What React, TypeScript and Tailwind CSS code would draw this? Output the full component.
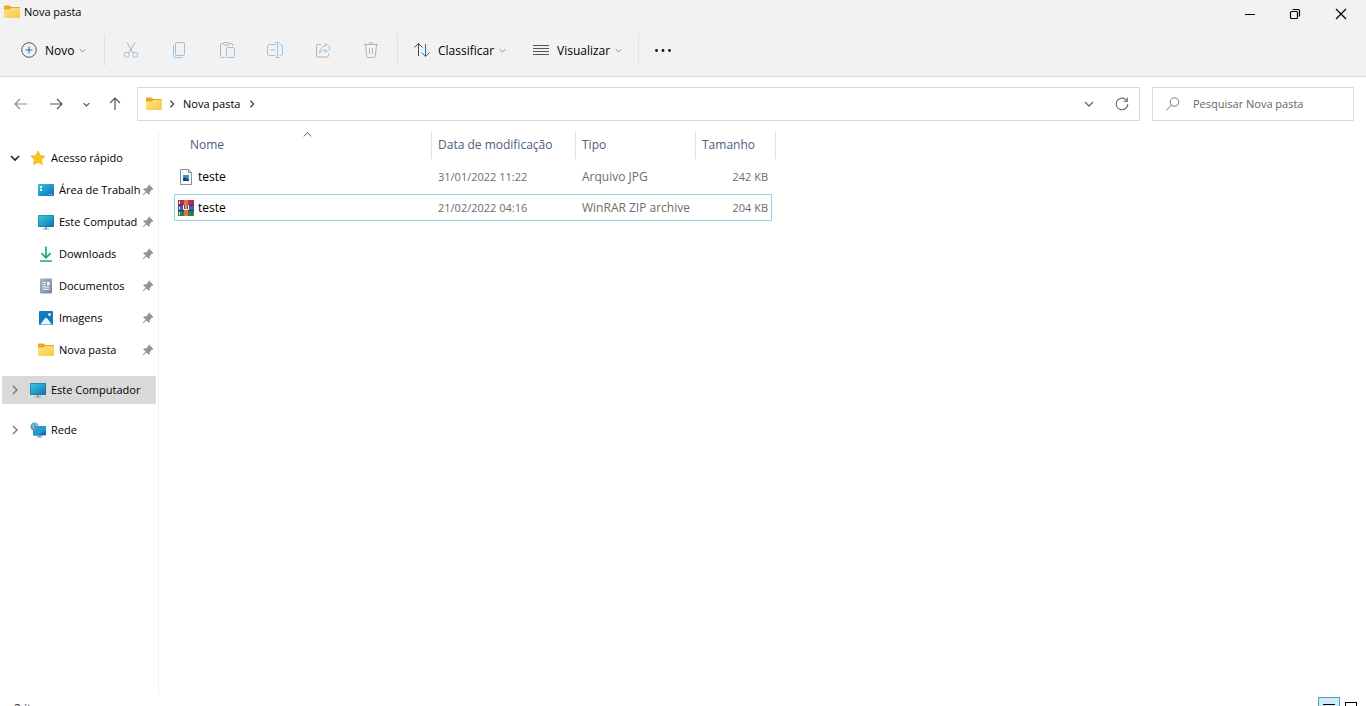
import type { ReactNode } from "react";

const FolderIcon = () => (
  <svg width="16" height="16" viewBox="0 0 16 16" className="shrink-0">
    <defs>
      <linearGradient id="folder" x1="0" y1="0" x2="1" y2="1">
        <stop offset="0" stopColor="#ffe58a" />
        <stop offset="1" stopColor="#f8c844" />
      </linearGradient>
    </defs>
    <path d="M0 2.500a1 1 0 0 1 1-1h4.600l1.800 1.600H15a1 1 0 0 1 1 1V9H0z" fill="#e9a820" />
    <path d="M0 5.500h5.400l2-1.600H15a1 1 0 0 1 1 1V13a1 1 0 0 1-1 1H1a1 1 0 0 1-1-1z" fill="url(#folder)" />
  </svg>
);

const MonitorIcon = () => (
  <svg width="16" height="16" viewBox="0 0 16 16" className="shrink-0">
    <defs>
      <linearGradient id="monitor" x1="0" y1="0" x2="1" y2="1">
        <stop offset="0" stopColor="#35cfe0" />
        <stop offset="1" stopColor="#1272b4" />
      </linearGradient>
    </defs>
    <path d="M7 13h2v2H7zM5 14.500h6v1H5z" fill="#8d9aa5" />
    <rect x="0" y="1" width="16" height="12" rx="1" fill="#1b6b94" />
    <rect x="0.600" y="1.600" width="14.800" height="10.800" rx="0.500" fill="url(#monitor)" />
  </svg>
);

const DesktopIcon = () => (
  <svg width="16" height="16" viewBox="0 0 16 16" className="shrink-0">
    <defs>
      <linearGradient id="desktop" x1="0" y1="0" x2="1" y2="1">
        <stop offset="0" stopColor="#2fc3e0" />
        <stop offset="1" stopColor="#0f6fb5" />
      </linearGradient>
    </defs>
    <rect x="0" y="2" width="16" height="12" rx="1" fill="url(#desktop)" />
    <path d="M2 4h2v2H2zM2 7h2v2H2z" fill="#fff" />
    <path d="M11 12h1v1h-1zM13 12h1v1h-1z" fill="#bfe6f7" />
  </svg>
);

const DownloadIcon = () => (
  <svg width="16" height="16" viewBox="0 0 16 16" fill="none" stroke="#23a58b" strokeWidth="1.7" className="shrink-0">
    <path d="M8 .5v11M3.400 7.200 8 11.800l4.600-4.600M2 15h12" />
  </svg>
);

const DocumentIcon = () => (
  <svg width="16" height="16" viewBox="0 0 16 16" className="shrink-0">
    <defs>
      <linearGradient id="document" x1="0" y1="0" x2="1" y2="1">
        <stop offset="0" stopColor="#a9b8c9" />
        <stop offset="1" stopColor="#71859d" />
      </linearGradient>
    </defs>
    <rect x="2" y="0.500" width="12" height="15" rx="1" fill="url(#document)" />
    <path d="M4.500 4h3.200v1H4.500zM4.500 6.200h3.200v1H4.500zM4.500 8.500h7v1h-7zM4.500 10.700h7v1h-7zM9 4h2.600v3.200H9z" fill="#fff" />
  </svg>
);

const PictureIcon = () => (
  <svg width="16" height="16" viewBox="0 0 16 16" className="shrink-0">
    <rect x="1" y="1" width="14" height="14" rx="1" fill="#1478c2" />
    <path d="m2.200 14.600 4.600-6a1.500 1.500 0 0 1 2.400 0l4.600 6z" fill="#e9f6fd" />
    <circle cx="11.500" cy="4.600" r="1.300" fill="#fff" />
  </svg>
);

const StarIcon = () => (
  <svg width="16" height="16" viewBox="0 0 16 16" className="shrink-0">
    <path
      d="m8 1 2.100 4.600 5 .6-3.700 3.400 1 5L8 12.200l-4.400 2.400 1-5L.9 6.200l5-.6z"
      fill="#fcc419"
      stroke="#f2b20e"
      strokeWidth="0.8"
      strokeLinejoin="round"
    />
  </svg>
);

const NetworkIcon = () => (
  <svg width="16" height="16" viewBox="0 0 16 16" className="shrink-0">
    <path d="M8.500 13h2v1.500H12v1H7v-1h1.500z" fill="#7f97a8" />
    <rect x="3" y="4" width="13" height="9.500" rx="0.8" fill="#1577b3" />
    <path d="M16 4v4L7 13.500H3.800A.8.8 0 0 1 3 12.700V4z" fill="#219bd0" />
    <circle cx="4.600" cy="4.600" r="4.200" fill="#4d9abd" />
    <path d="M1.500 2.500 4 4l-1 2.500M5 1l1 2 2.500.5" stroke="#c3e0ec" strokeWidth="0.9" fill="none" />
  </svg>
);

const PinIcon = () => (
  <svg width="12" height="12" viewBox="0 0 12 12" className="shrink-0" fill="#8c959d">
    <path d="M7 .6 11.400 5l-.8.8-.8-.1-2.100 2.200.1 2-.9.9L4.400 8.400.9 11.500l-.4-.4L3.600 7.600 1.200 5.200l.9-.9 2.100.1L6.400 2.200l-.2-.8z" />
  </svg>
);

type Dir = "down" | "right" | "up";
const chevrons: Record<Dir, string> = {
  down: "M1 3l4 4 4-4",
  right: "M3 1l4 4-4 4",
  up: "M1 7l4-4 4 4",
};
const Chevron = ({ dir = "down", size = 7, color = "#888", weight = 1.3 }: { dir?: Dir; size?: number; color?: string; weight?: number }) => (
  <svg width={size} height={size} viewBox="0 0 10 10" fill="none" stroke={color} strokeWidth={weight} className="shrink-0">
    <path d={chevrons[dir]} />
  </svg>
);

const Line = ({ children, color = "#333" }: { children: ReactNode; color?: string }) => (
  <svg width="16" height="16" viewBox="0 0 16 16" fill="none" stroke={color} strokeWidth="1" className="shrink-0">
    {children}
  </svg>
);

const gray = "#b4b4b4";
const blue = "#9cc3df";

const actions: { label: string; icon: ReactNode }[] = [
  {
    label: "Recortar",
    icon: (
      <Line color={blue}>
        <path d="M4 .5 10.300 11M12 .5 5.700 11" stroke={gray} />
        <circle cx="3.700" cy="12.800" r="2.500" />
        <circle cx="12.300" cy="12.800" r="2.500" />
      </Line>
    ),
  },
  {
    label: "Copiar",
    icon: (
      <Line color={blue}>
        <rect x="4.500" y="0.500" width="9" height="13" rx="1.500" />
        <path d="M2.500 3v10a2.500 2.500 0 0 0 2.500 2.500h6.500" />
      </Line>
    ),
  },
  {
    label: "Colar",
    icon: (
      <Line color={gray}>
        <path d="M6 15.500H2.500a1 1 0 0 1-1-1v-12a1 1 0 0 1 1-1h2M10.500 1.500h2a1 1 0 0 1 1 1V4" />
        <rect x="4.500" y="0.500" width="6" height="2.500" rx="1" />
        <rect x="7.500" y="5.500" width="8" height="10" rx="1" stroke={blue} />
      </Line>
    ),
  },
  {
    label: "Renomear",
    icon: (
      <Line color={blue}>
        <path d="M8.500 13.500h-6a2 2 0 0 1-2-2v-7a2 2 0 0 1 2-2h6M12.500 2.500h1a2 2 0 0 1 2 2v7a2 2 0 0 1-2 2h-1" />
        <path d="M8.500.5h4M10.500.5v15M8.500 15.500h4M3.500 8h4.500" />
      </Line>
    ),
  },
  {
    label: "Compartilhar",
    icon: (
      <Line color={gray}>
        <path d="M6 2.500H3a1.500 1.500 0 0 0-1.500 1.500v9.500A1.500 1.500 0 0 0 3 15h9a1.500 1.500 0 0 0 1.500-1.500v-2" />
        <path d="m10.500 1.500 5 4.500-5 4.500V8C7.500 8 6 9 4.500 11c.3-3.500 2-6.500 6-7z" stroke={blue} strokeLinejoin="round" />
      </Line>
    ),
  },
  {
    label: "Excluir",
    icon: (
      <Line color={gray}>
        <path d="M1 2.500h14M5.800 2.500a2.200 2 0 0 1 4.400 0M2.500 2.500l1.200 11.700a1.400 1.400 0 0 0 1.400 1.300h5.800a1.400 1.400 0 0 0 1.400-1.300L13.500 2.500M6.500 6v6M9.500 6v6" />
      </Line>
    ),
  },
];

const Separator = () => <div className="h-8 w-px shrink-0 bg-[#e2e2e2]" />;

const pinned: { label: string; icon: ReactNode }[] = [
  { label: "Área de Trabalh", icon: <DesktopIcon /> },
  { label: "Este Computad", icon: <MonitorIcon /> },
  { label: "Downloads", icon: <DownloadIcon /> },
  { label: "Documentos", icon: <DocumentIcon /> },
  { label: "Imagens", icon: <PictureIcon /> },
  { label: "Nova pasta", icon: <FolderIcon /> },
];

const JpgIcon = () => (
  <svg width="16" height="16" viewBox="0 0 16 16" className="shrink-0">
    <path d="M2.500.5h8l3 3v12h-11z" fill="#fafafa" stroke="#8e8e8e" />
    <path d="M10.500.5v3h3" fill="none" stroke="#8e8e8e" />
    <rect x="5" y="6" width="6" height="6" fill="#2b9bd0" />
    <path d="M5 12V9.500L7 8.200 11 11v1z" fill="#173f78" />
  </svg>
);

const RarIcon = () => (
  <svg width="16" height="16" viewBox="0 0 16 16" className="shrink-0">
    <rect y="0" width="16" height="5" fill="#b82c4e" />
    <rect y="5" width="16" height="6" fill="#3f5fc0" />
    <rect y="11" width="16" height="5" fill="#23874a" />
    <path d="M0 5.300h16M0 10.700h16" stroke="#2a2440" strokeWidth="0.8" />
    <path d="M1.500 1v3M1.500 6.500v3M1.500 12v3" stroke="#d6dcee" strokeWidth="1" />
    <rect x="6" width="4" height="16" fill="#e07830" />
    <rect x="5" y="5" width="6" height="5" fill="#8e3a58" />
    <path d="M5.500 5v4.500h5V5M8 5v4" fill="none" stroke="#fff" strokeWidth="1" />
  </svg>
);

const files = [
  { name: "teste", date: "31/01/2022 11:22", type: "Arquivo JPG", size: "242 KB", icon: <JpgIcon />, focused: false },
  { name: "teste", date: "21/02/2022 04:16", type: "WinRAR ZIP archive", size: "204 KB", icon: <RarIcon />, focused: true },
];

function TitleBar() {
  return (
    <div className="flex h-7 justify-between">
      <div className="flex h-6 items-center gap-1 pl-1">
        <FolderIcon />
        <h1 className="text-[11px]">Nova pasta</h1>
      </div>
      <div className="flex pr-px">
        <button aria-label="Minimizar" className="flex w-[45px] items-center justify-center">
          <svg width="12" height="12" viewBox="0 0 12 12" stroke="#000"><path d="M1 6.500h10" /></svg>
        </button>
        <button aria-label="Restaurar" className="flex w-[45px] items-center justify-center">
          <svg width="12" height="12" viewBox="0 0 12 12" fill="none" stroke="#000" strokeWidth="1.200">
            <rect x="1.500" y="3.500" width="7" height="7" rx="1" />
            <path d="M3.500 1.500H9A1.500 1.500 0 0 1 10.500 3v5.500" />
          </svg>
        </button>
        <button aria-label="Fechar" className="flex w-12 items-center justify-center">
          <svg width="12" height="12" viewBox="0 0 12 12" stroke="#000" strokeWidth="1.200"><path d="m1 1 10 10M11 1 1 11" /></svg>
        </button>
      </div>
    </div>
  );
}

function MenuLabel({ children }: { children: string }) {
  return (
    <span className="flex items-center gap-[5px] pt-px">
      {children}
      <Chevron />
    </span>
  );
}

function Toolbar() {
  return (
    <div className="flex h-12 items-center pb-1">
      <button className="flex h-8 w-[104px] items-center gap-2 pl-[21px]">
        <Line color="#555">
          <circle cx="8" cy="8" r="7.300" />
          <path d="M8 4.500v7M4.500 8h7" stroke="#1577b8" />
        </Line>
        <MenuLabel>Novo</MenuLabel>
      </button>
      <Separator />
      <div className="flex w-[292px] justify-center">
        {actions.map((a) => (
          <button key={a.label} aria-label={a.label} className="flex h-8 w-12 items-center justify-center">
            {a.icon}
          </button>
        ))}
      </div>
      <Separator />
      <div className="flex w-60 items-center">
        <button className="flex h-8 w-[119px] items-center gap-2 pl-4">
          <Line color="#444">
            <path d="M4.500 14V1.500M.5 5.500l4-4 4 4" />
            <path d="M11.500 2v12.500M7.500 10.500l4 4 4-4" stroke="#1577b8" />
          </Line>
          <MenuLabel>Classificar</MenuLabel>
        </button>
        <button className="flex h-8 items-center gap-2 pl-4">
          <Line color="#555">
            <path d="M0 3.500h16M0 6.500h16M0 9.500h16M0 12.500h16" />
          </Line>
          <MenuLabel>Visualizar</MenuLabel>
        </button>
      </div>
      <Separator />
      <button aria-label="Ver mais" className="flex h-8 w-12 items-center justify-center">
        <svg width="16" height="16" viewBox="0 0 16 16" fill="#111">
          <circle cx="1.500" cy="8.500" r="1.400" />
          <circle cx="8" cy="8.500" r="1.400" />
          <circle cx="14.500" cy="8.500" r="1.400" />
        </svg>
      </button>
    </div>
  );
}

function NavigationRow() {
  return (
    <div className="flex h-[54px] items-center pr-3 text-[11px]">
      <div className="flex w-[137px] shrink-0 items-center pl-1">
        <button aria-label="Voltar" className="flex h-8 w-[34px] items-center justify-center">
          <Line color="#8c8c8c"><path d="M14 8H2M7 3 2 8l5 5" strokeWidth="1.200" /></Line>
        </button>
        <button aria-label="Avançar" className="flex h-8 w-9 items-center justify-center">
          <Line color="#555"><path d="M2 8h12M9 3l5 5-5 5" strokeWidth="1.200" /></Line>
        </button>
        <button aria-label="Locais recentes" className="flex h-8 w-6 items-center justify-center">
          <Chevron color="#555" weight={1.8} />
        </button>
        <button aria-label="Acima" className="flex h-8 w-[34px] items-center justify-center">
          <Line color="#555"><path d="M8 14V2M3 7l5-5 5 5" strokeWidth="1.200" /></Line>
        </button>
      </div>
      <nav aria-label="Endereço" className="flex h-[34px] flex-1 items-center border border-[#d9d9d9] bg-white pl-2">
        <FolderIcon />
        <div className="flex w-5 justify-center"><Chevron dir="right" size={8} color="#444" weight={1.6} /></div>
        <a href="#nova-pasta" className="w-[66px] pl-px">Nova pasta</a>
        <Chevron dir="right" size={8} color="#444" weight={1.6} />
        <button aria-label="Locais anteriores" className="ml-auto flex h-8 w-8 items-center justify-center">
          <Chevron size={10} color="#666" />
        </button>
        <button aria-label="Atualizar" className="flex h-8 w-[34px] items-center justify-center">
          <Line color="#666"><path d="M13.800 8a5.800 5.800 0 1 1-2-4.400L13 5M13.300 1.500V5.200H9.600" strokeWidth="1.100" /></Line>
        </button>
      </nav>
      <div className="ml-3 flex h-[34px] w-[202px] items-center gap-3 border border-[#d9d9d9] bg-white pl-3">
        <label htmlFor="search" aria-label="Pesquisar Nova pasta">
          <Line color="#777"><circle cx="9.500" cy="6" r="4.300" /><path d="m6.400 9.200-5 5" /></Line>
        </label>
        <input id="search" type="text" placeholder="Pesquisar Nova pasta" className="min-w-0 flex-1 bg-transparent outline-none placeholder:text-[#666]" />
      </div>
    </div>
  );
}

function Sidebar() {
  return (
    <aside className="w-[159px] shrink-0 border-r border-[#f0f0f0] pt-[11px] text-[11px]">
      <a href="#acesso-rapido" className="flex h-8 items-center gap-[5px] pl-[10px]">
        <span className="flex w-[15px]"><Chevron size={10} color="#222" weight={1.6} /></span>
        <StarIcon />
        <span>Acesso rápido</span>
      </a>
      {pinned.map((p) => (
        <a key={p.label} href="#fixado" className="flex h-8 items-center justify-between pr-1 pl-[38px]">
          <span className="flex items-center gap-[5px] whitespace-nowrap">
            {p.icon}
            {p.label}
          </span>
          <PinIcon />
        </a>
      ))}
      <a href="#computador" className="mt-[10px] ml-[2px] mr-[2px] flex h-7 items-center gap-[5px] rounded-xs bg-[#d9d9d9] pl-2">
        <span className="flex w-[15px]"><Chevron dir="right" size={10} color="#777" weight={1.4} /></span>
        <MonitorIcon />
        <span className="whitespace-nowrap">Este Computador</span>
      </a>
      <a href="#rede" className="mt-3 flex h-7 items-center gap-[5px] pl-[10px]">
        <span className="flex w-[15px]"><Chevron dir="right" size={10} color="#777" weight={1.4} /></span>
        <NetworkIcon />
        <span>Rede</span>
      </a>
    </aside>
  );
}

function FileTable() {
  const head = "border-r border-[#e2e2e2] pb-[2px] pl-[6px] text-left font-normal";
  return (
    <table className="-mt-[3px] ml-[15px] w-[602px] table-fixed border-separate border-spacing-x-0 border-spacing-y-1 self-start">
      <colgroup>
        <col className="w-[258px]" />
        <col className="w-36" />
        <col className="w-[120px]" />
        <col className="w-[76px]" />
        <col className="w-1" />
      </colgroup>
      <thead className="text-[#4c607a]">
        <tr className="h-[27px]">
          <th className="relative border-r border-[#e2e2e2] pb-[2px] pl-4 text-left font-normal">
            Nome
            <span className="absolute -top-[2px] left-1/2"><Chevron dir="up" size={9} color="#555" weight={1.1} /></span>
          </th>
          <th className={head}>Data de modificação</th>
          <th className={head}>Tipo</th>
          <th className={head} colSpan={2}>Tamanho</th>
        </tr>
      </thead>
      <tbody className="text-[#6d6d6d]">
        {files.map((f) => {
          const edge = f.focused ? "border-[#99d1e0]" : "border-transparent";
          return (
            <tr key={f.type} className="h-[27px]">
              <td className={`rounded-l-xs border-y border-l pl-[3px] text-black ${edge}`}>
                <span className="flex items-center gap-1">
                  {f.icon}
                  {f.name}
                </span>
              </td>
              <td className={`border-y pl-[6px] text-[11px] ${edge}`}>{f.date}</td>
              <td className={`border-y pl-[6px] whitespace-nowrap ${edge}`}>{f.type}</td>
              <td className={`border-y border-r pr-[3px] text-right text-[11px] ${edge}`}>{f.size}</td>
            </tr>
          );
        })}
      </tbody>
    </table>
  );
}

export default function App() {
  return (
    <div className="flex h-screen flex-col overflow-hidden bg-white font-['Open_Sans','Noto_Sans',sans-serif] text-[12px] leading-4 text-black">
      <header className="border-b border-[#dcdcdc] bg-[#f2f2f2]">
        <TitleBar />
        <Toolbar />
      </header>
      <NavigationRow />
      <main className="flex min-h-0 flex-1">
        <Sidebar />
        <FileTable />
      </main>
      <footer className="mt-[2px] flex h-[9px] shrink-0 items-start justify-between overflow-hidden pr-1 pl-[14px]">
        <span className="pt-1 text-[#333]">2 itens</span>
        <div className="flex">
          <button aria-label="Detalhes" className="flex h-5 w-[22px] justify-center border border-[#3f9fc4] bg-[#d3ebf5] pt-[5px]">
            <svg width="12" height="10" viewBox="0 0 12 10" stroke="#000"><path d="M0 1.500h12M0 4.500h12M0 7.500h12" /></svg>
          </button>
          <button aria-label="Ícones grandes" className="flex h-5 w-[22px] justify-center pt-[5px]">
            <svg width="12" height="12" viewBox="0 0 12 12" fill="none" stroke="#000"><rect x="0.500" y="0.500" width="11" height="11" /></svg>
          </button>
        </div>
      </footer>
    </div>
  );
}
